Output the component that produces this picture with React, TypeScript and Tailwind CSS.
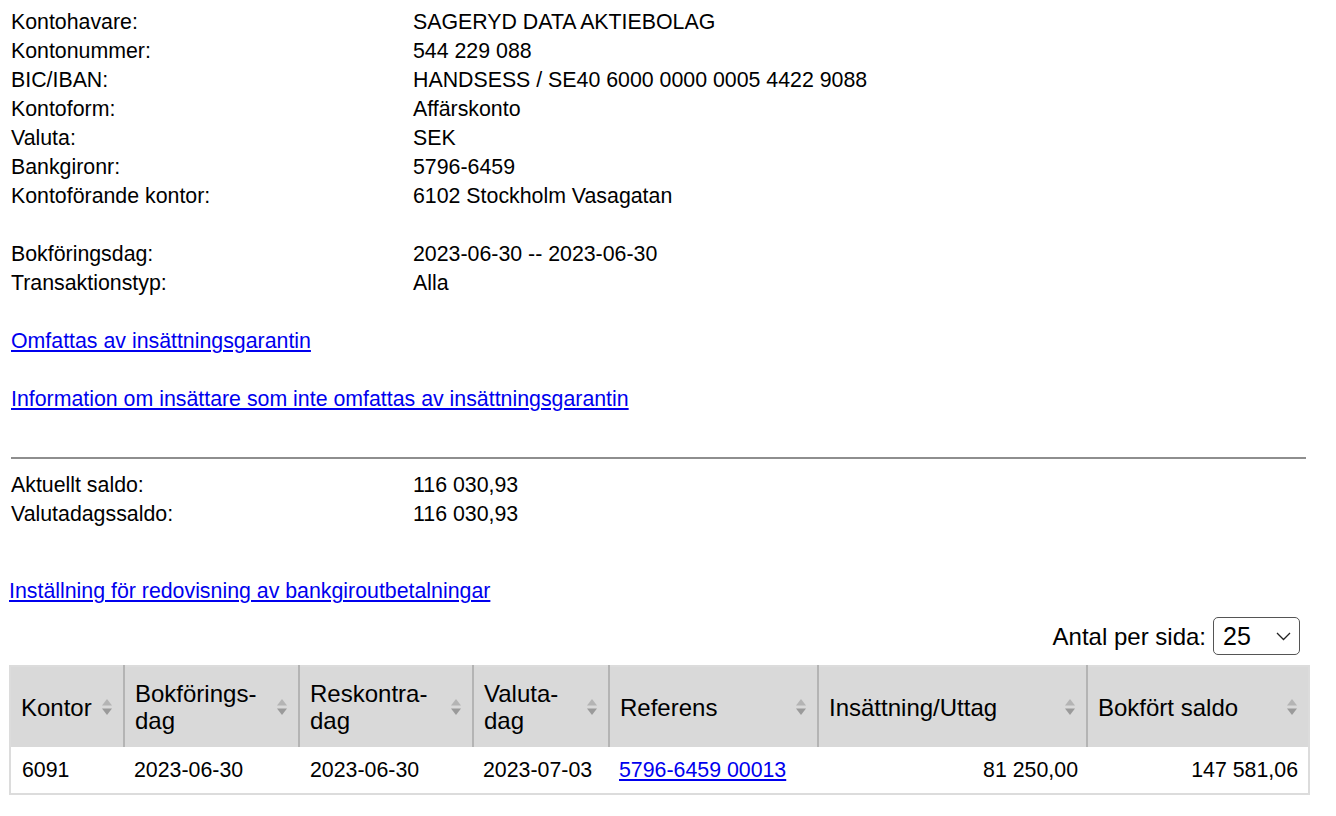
import React from "react";

const info: [string, string][] = [
  ["Kontohavare:", "SAGERYD DATA AKTIEBOLAG"],
  ["Kontonummer:", "544 229 088"],
  ["BIC/IBAN:", "HANDSESS / SE40 6000 0000 0005 4422 9088"],
  ["Kontoform:", "Affärskonto"],
  ["Valuta:", "SEK"],
  ["Bankgironr:", "5796-6459"],
  ["Kontoförande kontor:", "6102 Stockholm Vasagatan"],
];

function SortIcon() {
  return (
    <svg width="10" height="16" viewBox="0 0 10 16" className="absolute right-[11px] top-1/2 -translate-y-1/2">
      <polygon points="0,6.5 5,0 10,6.5" fill="#b4b4b4" />
      <polygon points="0,9.5 10,9.5 5,16" fill="#9a9a9a" />
    </svg>
  );
}

function Th({ children, w, first }: { children: React.ReactNode; w: string; first?: boolean }) {
  return (
    <th
      className={`relative ${w} h-[81px] pl-[10px] pr-[30px] text-left align-middle font-normal text-[24px] leading-[27px] ${
        first ? "" : "border-l-2 border-[#b4b4b4]"
      }`}
    >
      {children}
      <SortIcon />
    </th>
  );
}

export default function App() {
  return (
    <div className="w-[1336px] min-h-[816px] bg-white text-black font-['Liberation_Sans',Arial,sans-serif] text-[21.33px] leading-[29px]">
      <div className="pt-[8px]">
        <div className="pl-[11px] grid grid-cols-[402px_1fr]">
          {info.map(([l, v]) => (
            <React.Fragment key={l}>
              <div className="h-[29px]">{l}</div>
              <div className="h-[29px]">{v}</div>
            </React.Fragment>
          ))}
          <div className="h-[29px] col-span-2" />
          <div className="h-[29px]">Bokföringsdag:</div>
          <div className="h-[29px]">2023-06-30 -- 2023-06-30</div>
          <div className="h-[29px]">Transaktionstyp:</div>
          <div className="h-[29px]">Alla</div>
        </div>
        <div className="pl-[11px] mt-[29px] h-[29px]">
          <a href="#" className="text-[#0000ee] underline">Omfattas av insättningsgarantin</a>
        </div>
        <div className="pl-[11px] mt-[29px] h-[29px]">
          <a href="#" className="text-[#0000ee] underline">
            Information om insättare som inte omfattas av insättningsgarantin
          </a>
        </div>
        <div className="ml-[11px] mr-[30px] mt-[43px] border-t-2 border-[#8e8e8e]" />
        <div className="pl-[11px] mt-[12px] grid grid-cols-[402px_1fr]">
          <div className="h-[29px]">Aktuellt saldo:</div>
          <div className="h-[29px]">116 030,93</div>
          <div className="h-[29px]">Valutadagssaldo:</div>
          <div className="h-[29px]">116 030,93</div>
        </div>
        <div className="pl-[9px] mt-[48px] h-[29px]">
          <a href="#" className="text-[#0000ee] underline">Inställning för redovisning av bankgiroutbetalningar</a>
        </div>
        <div className="mt-[11px] mr-[36px] flex justify-end items-center gap-[7px]">
          <span className="text-[24px] leading-[27px]">Antal per sida:</span>
          <div className="w-[87px] h-[38px] border border-[#555] rounded-[5px] flex items-center justify-between pl-[9px] pr-[8px]">
            <span className="text-[25px] leading-[27px]">25</span>
            <svg width="15" height="9" viewBox="0 0 15 9">
              <polyline points="1,1 7.5,7.5 14,1" fill="none" stroke="#222" strokeWidth="1.3" />
            </svg>
          </div>
        </div>
        <div className="mt-[10px] ml-[9px]">
          <table className="w-[1299px] border-collapse border-2 border-[#dcdcdc] table-fixed">
            <thead>
              <tr className="bg-[#d9d9d9]">
                <Th w="w-[114px]" first>Kontor</Th>
                <Th w="w-[175px]">Bokförings-<br />dag</Th>
                <Th w="w-[174px]">Reskontra-<br />dag</Th>
                <Th w="w-[136px]">Valuta-<br />dag</Th>
                <Th w="w-[209px]">Referens</Th>
                <Th w="w-[269px]">Insättning/Uttag</Th>
                <Th w="w-[222px]">Bokfört saldo</Th>
              </tr>
            </thead>
            <tbody>
              <tr className="h-[47px]">
                <td className="pl-[11px]">6091</td>
                <td className="pl-[10px]">2023-06-30</td>
                <td className="pl-[11px]">2023-06-30</td>
                <td className="pl-[10px]">2023-07-03</td>
                <td className="pl-[10px]">
                  <a href="#" className="text-[#0000ee] underline">5796-6459 00013</a>
                </td>
                <td className="pr-[9px] text-right">81 250,00</td>
                <td className="pr-[10px] text-right">147 581,06</td>
              </tr>
            </tbody>
          </table>
        </div>
      </div>
    </div>
  );
}
